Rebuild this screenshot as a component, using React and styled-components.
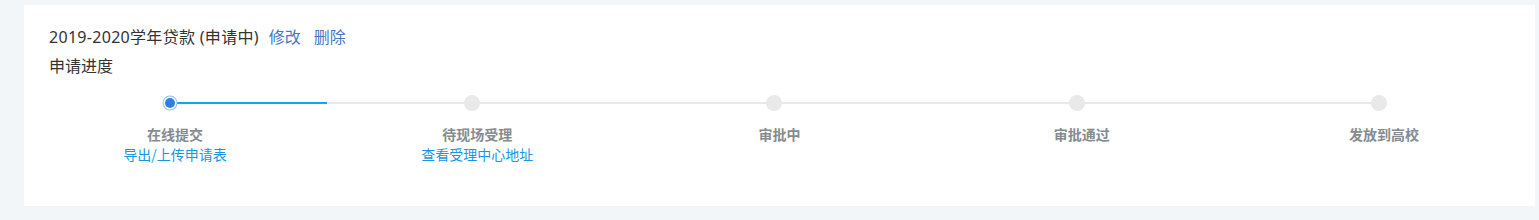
import styled, { createGlobalStyle } from "styled-components";

const GlobalStyle = createGlobalStyle`
  html, body {
    margin: 0;
    padding: 0;
    background: #f2f6f9;
    font-family: "Noto Sans", "Noto Sans CJK SC", sans-serif;
  }
`;

const steps = [
  { title: "在线提交", link: "导出/上传申请表" },
  { title: "待现场受理", link: "查看受理中心地址" },
  { title: "审批中" },
  { title: "审批通过" },
  { title: "发放到高校" },
];

// current step index and how far the bar has run toward the next one
const current = 0;
const progress = 52;

const App = () => {
  return (
    <>
      <GlobalStyle />
      <Page>
        <Card>
          <Header>
            <TitleRow>
              <Title>2019-2020学年贷款 (申请中)</Title>
              <ActionLink>修改</ActionLink>
              <ActionLink>删除</ActionLink>
            </TitleRow>
            <SubTitle>申请进度</SubTitle>
          </Header>
          <Steps>
            {steps.map((s, i) => (
              <Step key={s.title}>
                <DotRow>
                  {i < steps.length - 1 && (
                    <Connector>
                      {i === current && (
                        <ConnectorFill style={{ width: `${progress}%` }} />
                      )}
                    </Connector>
                  )}
                  <Dot $active={i === current} />
                </DotRow>
                <StepTitle>{s.title}</StepTitle>
                {s.link && <StepLink>{s.link}</StepLink>}
              </Step>
            ))}
          </Steps>
        </Card>
      </Page>
    </>
  );
};

const Page = styled.div`
  padding: 5px 4px 14px 24px;
`;

const Card = styled.div`
  background: #fff;
  padding: 20px 0 40px;
  height: 141px;
`;

const Header = styled.div`
  padding-left: 25px;
`;

const TitleRow = styled.div`
  display: flex;
  align-items: center;
  height: 24px;
  font-size: 16px;
  line-height: 24px;
`;

const Title = styled.span`
  color: #333;
  letter-spacing: 0.3px;
`;

const ActionLink = styled.a`
  color: #4677c4;
  margin-left: 10px;
  cursor: pointer;

  & + & {
    margin-left: 13px;
  }
`;

const SubTitle = styled.div`
  margin-top: 5px;
  font-size: 16px;
  line-height: 24px;
  color: #333;
`;

const Steps = styled.div`
  display: grid;
  grid-template-columns: repeat(5, 1fr);
  margin-top: 17px;
`;

const Step = styled.div`
  display: flex;
  flex-direction: column;
  align-items: center;
  font-family: "Noto Sans CJK SC", sans-serif;
`;

const DotRow = styled.div`
  position: relative;
  align-self: stretch;
  margin-right: 10px;
  height: 16px;
  display: flex;
  justify-content: center;
  align-items: center;
`;

const Connector = styled.div`
  position: absolute;
  left: 50%;
  width: calc(100% + 10px);
  top: 7px;
  height: 2px;
  background: #e9e9e9;
`;

const ConnectorFill = styled.div`
  height: 100%;
  background: #0aa9ec;
`;

const Dot = styled.span`
  position: relative;
  box-sizing: border-box;
  border-radius: 50%;
  ${(p) =>
    p.$active
      ? `
    width: 10px;
    height: 10px;
    background: #2f7fe2;
    box-shadow: 0 0 0 1.5px #fff, 0 0 0 2.5px #93bdf1;
  `
      : `
    width: 16px;
    height: 16px;
    background: #e9e9e9;
  `}
`;

const StepTitle = styled.div`
  margin-top: 13px;
  font-size: 14px;
  line-height: 20px;
  font-weight: bold;
  color: #858b8e;
`;

const StepLink = styled.a`
  font-size: 14px;
  line-height: 20px;
  color: #1a95e2;
  cursor: pointer;
`;

export default App;
